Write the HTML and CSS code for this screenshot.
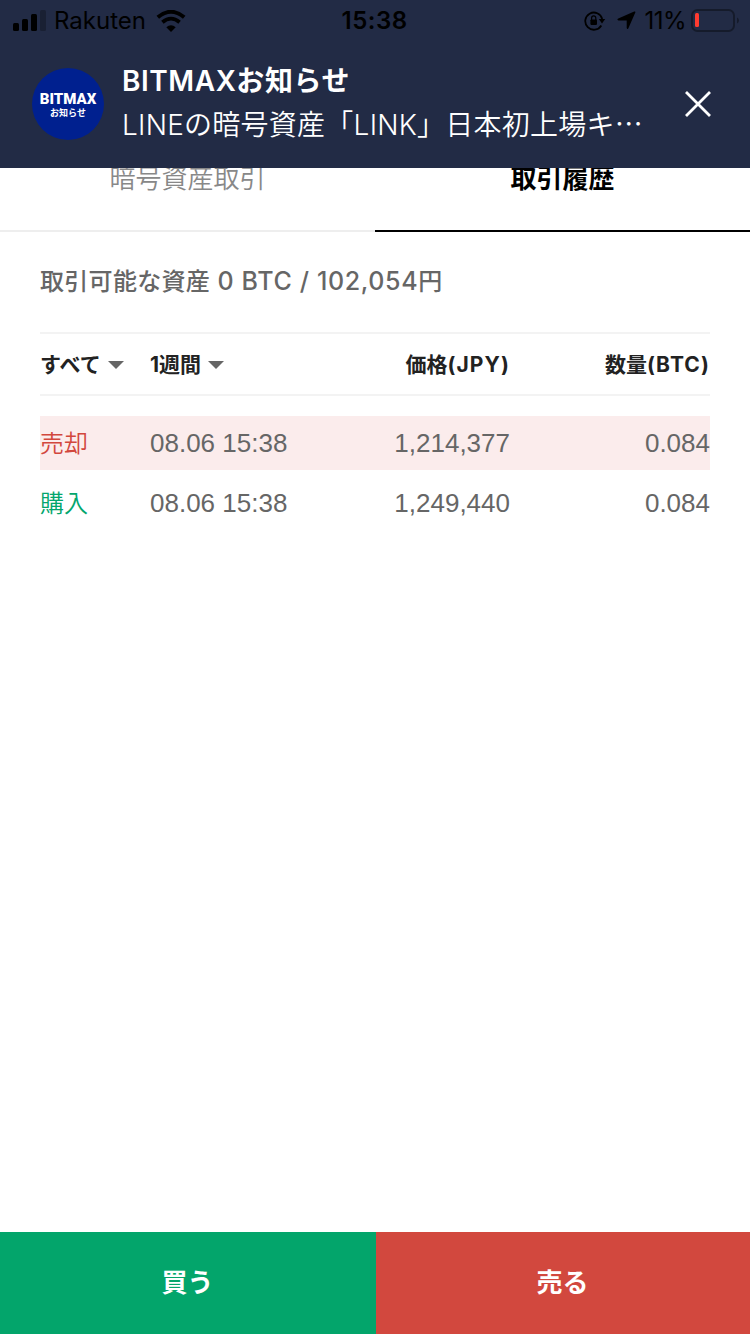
FILE: index.html
```html
<!DOCTYPE html>
<html lang="ja">
<head>
  <meta charset="UTF-8">
  <meta name="viewport" content="width=device-width, initial-scale=1.0">
  <title>BITMAX 取引履歴</title>
  <link rel="stylesheet" href="styles.css">
</head>
<body>

<header class="banner">
  <div class="status-bar">
    <div class="status-left">
      <svg class="signal" width="33" height="22" viewBox="0 0 33 22">
        <rect x="0" y="13" width="6" height="8" rx="1.5"/>
        <rect x="9" y="9" width="6" height="12" rx="1.5"/>
        <rect x="18" y="4" width="6" height="17" rx="1.5"/>
        <rect x="27" y="0" width="6" height="21" rx="1.5" opacity=".25"/>
      </svg>
      <span class="carrier">Rakuten</span>
      <svg class="wifi" width="30" height="22" viewBox="0 0 30 22">
        <path d="M1.8 7.2Q15 -3.6 28.2 7.2" fill="none" stroke="#000" stroke-width="4"/>
        <path d="M6.4 12.2Q15 5 23.6 12.2" fill="none" stroke="#000" stroke-width="3.8"/>
        <path d="M10.3 17.2Q15 13.2 19.7 17.2L15 22z"/>
      </svg>
    </div>
    <span class="clock">15:38</span>
    <div class="status-right">
      <svg class="lock" width="22" height="20" viewBox="0 0 22 20">
        <path d="M17.3 14.5A8.6 8.6 0 1 1 18.2 8" fill="none" stroke="#000" stroke-width="1.8"/>
        <path d="M14.8 8h6.4L18 12.6z"/>
        <rect x="6.4" y="8.5" width="6.6" height="5.4" rx=".8"/>
        <path d="M7.6 9V7a2.1 2.1 0 0 1 4.2 0v2" fill="none" stroke="#000" stroke-width="1.2"/>
      </svg>
      <svg class="location" width="19" height="19" viewBox="0 0 19 19">
        <path d="M17.2.5Q18.9 0 18.3 1.6L11.4 17.2Q10.3 19 9.7 17V9.5H1.5Q-.6 8.6 1.3 7.6z"/>
      </svg>
      <span class="percent">11%</span>
      <svg class="battery" width="48" height="24" viewBox="0 0 48 24">
        <rect x="1" y="1" width="42" height="21" rx="5.5" fill="none" stroke="#151b2b" stroke-width="2"/>
        <path d="M46 8.500q2 1 2 3t-2 3z" fill="#151b2b"/>
        <rect x="4" y="4" width="4" height="14" rx="1.5" fill="#ff3b30"/>
      </svg>
    </div>
  </div>

  <div class="notice">
    <div class="logo">
      <span class="logo-name">BITMAX</span>
      <span class="logo-sub">お知らせ</span>
    </div>
    <div class="notice-text">
      <div class="notice-title">BITMAXお知らせ</div>
      <div class="notice-body">LINEの暗号資産「LINK」日本初上場キ<span class="dots">…</span></div>
    </div>
    <svg class="close" width="26" height="26" viewBox="0 0 26 26">
      <path d="M1 1l24 24M25 1L1 25" stroke="#fff" stroke-width="2.8"/>
    </svg>
  </div>
</header>

<nav class="tabs">
  <div class="tab">暗号資産取引</div>
  <div class="tab active">取引履歴</div>
</nav>

<main class="content">
  <p class="assets">取引可能な資産<span class="amount"> 0 BTC / 102,054</span>円</p>

  <div class="row head">
    <div class="filter">すべて<span class="arrow"></span></div>
    <div class="filter">1週間<span class="arrow"></span></div>
    <div class="num">価格<span class="unit">(JPY)</span></div>
    <div class="num">数量<span class="unit">(BTC)</span></div>
  </div>

  <div class="trades">
    <div class="row trade sell">
      <div class="side">売却</div>
      <div>08.06 15:38</div>
      <div class="num">1,214,377</div>
      <div class="num">0.084</div>
    </div>
    <div class="row trade buy">
      <div class="side">購入</div>
      <div>08.06 15:38</div>
      <div class="num">1,249,440</div>
      <div class="num">0.084</div>
    </div>
  </div>
</main>

<footer class="actions">
  <div class="action action-buy">買う</div>
  <div class="action action-sell">売る</div>
</footer>

</body>
</html>
```
FILE: styles.css
```css
* {
  box-sizing: border-box;
}

body {
  margin: 0;
  height: 1334px;
  display: flex;
  flex-direction: column;
  background: #fff;
  color: #666;
  font-family: Inter, "Noto Sans CJK JP", sans-serif;
  overflow: hidden;
}

svg {
  display: block;
  flex: none;
}

/* banner */
.banner {
  position: relative;
  z-index: 1;
  height: 168px;
  flex: none;
  background: #222b45;
}

.status-bar {
  display: grid;
  grid-template-columns: 1fr auto 1fr;
  align-items: center;
  height: 40px;
  padding: 0 11px 0 13px;
  color: #000;
  font-size: 24px;
  line-height: 40px;
}

.status-left,
.status-right {
  display: flex;
  align-items: center;
}

.status-right {
  justify-content: flex-end;
}

.carrier {
  margin: 1px 10px 0 8px;
}

.clock {
  padding: 1px 3px 0 0;
  font-weight: 600;
  letter-spacing: 0.5px;
}

.lock {
  margin-right: 1px;
}

.location {
  margin-left: 10px;
}

.percent {
  margin: 1px 5px 0 8px;
  letter-spacing: -0.5px;
}

.notice {
  display: flex;
  align-items: center;
  height: 128px;
  padding: 0 39px 0 32px;
  color: #fff;
}

.logo {
  display: flex;
  flex-direction: column;
  align-items: center;
  justify-content: center;
  width: 72px;
  height: 72px;
  padding-top: 3px;
  border-radius: 50%;
  background: #00208f;
}

.logo-name {
  font-family: Roboto, sans-serif;
  font-size: 15px;
  font-weight: 900;
  line-height: 15px;
}

.logo-sub {
  font-size: 9px;
  font-weight: 700;
  line-height: 12px;
}

.notice-text {
  flex: 1;
  margin-left: 18px;
  white-space: nowrap;
}

.notice-title {
  font-size: 28px;
  font-weight: 600;
  letter-spacing: 0.55px;
  line-height: 44px;
}

.notice-body {
  margin-top: -2px;
  padding-bottom: 2px;
  font-size: 28px;
  font-weight: 350;
  letter-spacing: 0.25px;
  line-height: 44px;
}

.dots {
  font-family: "Noto Sans CJK JP", sans-serif;
}

/* tabs */
.tabs {
  display: flex;
  flex: none;
  height: 104px;
  margin-top: -40px;
}

.tab {
  width: 50%;
  border-bottom: 2px solid #eee;
  color: #888;
  font-size: 26px;
  font-weight: 350;
  line-height: 102px;
  text-align: center;
}

.tab.active {
  border-bottom-color: #000;
  color: #000;
  font-weight: 700;
}

/* history */
.content {
  flex: 1;
  padding: 0 40px;
}

.assets {
  height: 100px;
  margin: 0;
  font-size: 24px;
  font-weight: 500;
  letter-spacing: 0.3px;
  line-height: 98px;
  white-space: pre;
}

.amount {
  font-size: 25px;
  font-weight: 450;
  letter-spacing: 0.65px;
}

.row {
  display: grid;
  grid-template-columns: 110px 160px 200px 200px;
  align-items: center;
}

.num {
  text-align: right;
}

.head {
  height: 64px;
  padding-bottom: 2px;
  border-top: 2px solid #f3f3f3;
  border-bottom: 2px solid #f3f3f3;
  color: #222;
  font-size: 21px;
  font-weight: 700;
}

.unit {
  letter-spacing: 1.1px;
}

.filter {
  display: flex;
  align-items: center;
}

.arrow {
  margin: 4px 0 0 7px;
  border: 8px solid transparent;
  border-top-color: #666;
  border-bottom: 0;
}

.trades {
  display: flex;
  flex-direction: column;
  gap: 6px;
  padding-top: 20px;
}

.trade {
  height: 54px;
  font-family: "Liberation Sans", "Noto Sans CJK JP", sans-serif;
  font-size: 26px;
}

.side {
  padding-bottom: 4px;
  font-size: 24px;
  font-weight: 350;
}

.sell {
  background: #fbecec;
}

.sell .side {
  color: #d2473d;
}

.buy .side {
  color: #03a66d;
}

/* bottom buttons */
.actions {
  display: flex;
  flex: none;
  height: 102px;
}

.action {
  flex: none;
  width: 374px;
  padding-right: 1px;
  color: #fff;
  font-size: 26px;
  font-weight: 700;
  line-height: 102px;
  text-align: center;
}

.action-buy {
  width: 376px;
  background: #03a56b;
}

.action-sell {
  background: #d2483e;
}
```
